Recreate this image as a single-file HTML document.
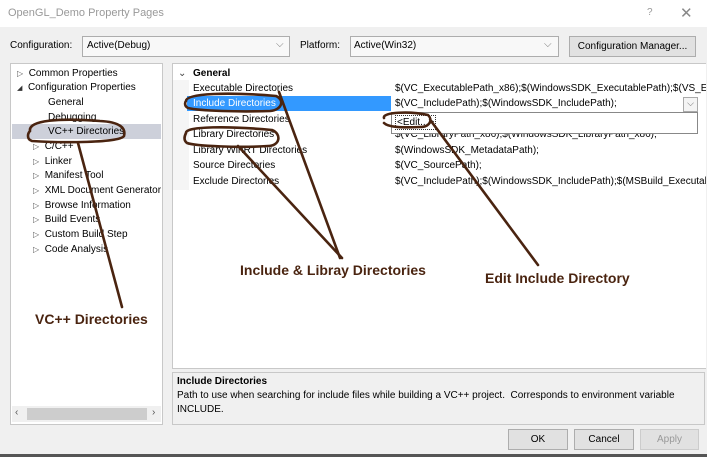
<!DOCTYPE html><html><head><style>
body{margin:0;width:707px;height:457px;background:#f0f0f0;font-family:"Liberation Sans",sans-serif;font-size:10px;color:#000;position:relative;overflow:hidden}
.a{position:absolute;white-space:nowrap}
.box{position:absolute;background:#fff;border:1px solid #adadad;overflow:hidden}
.btn{position:absolute;background:#e1e1e1;border:1px solid #adadad;text-align:center;line-height:19px}
.t{position:absolute;white-space:nowrap;line-height:15px}
.lab{position:absolute;white-space:nowrap;font-weight:bold;color:#4a2410;font-size:14px}
</style></head><body>
<div class="a" style="left:0;top:0;width:707px;height:27px;background:#fff"></div>
<div class="a" style="left:8px;top:7px;color:#999;font-size:11px">OpenGL_Demo Property Pages</div>
<div class="a" style="left:647px;top:7px;color:#999">?</div>
<div class="a" style="left:680px;top:4px;color:#888;font-size:15px">✕</div>

<div class="a" style="left:10px;top:40px">Configuration:</div>
<div class="box" style="left:82px;top:36px;width:206px;height:19px;background:#f8f8f8"><span class="a" style="left:4px;top:3px">Active(Debug)</span><span class="a" style="left:193px;top:2px;color:#777">⌵</span></div>
<div class="a" style="left:300px;top:40px">Platform:</div>
<div class="box" style="left:350px;top:36px;width:207px;height:19px;background:#f8f8f8"><span class="a" style="left:3px;top:3px">Active(Win32)</span><span class="a" style="left:193px;top:2px;color:#777">⌵</span></div>
<div class="btn" style="left:569px;top:36px;width:125px;height:19px">Configuration Manager...</div>

<div class="box" style="left:10px;top:63px;width:151px;height:360px;border-color:#c8c8c8">
<div class="a" style="left:1px;top:60px;width:149px;height:15px;background:#cdd0da"></div>
<div class="t" style="left:6px;top:2px"><span style="font-size:8px;color:#555">▷</span>&nbsp; Common Properties</div>
<div class="t" style="left:6px;top:16px"><span style="font-size:7px;color:#333">◢</span>&nbsp; Configuration Properties</div>
<div class="t" style="left:37px;top:31px">General</div>
<div class="t" style="left:37px;top:46px">Debugging</div>
<div class="t" style="left:37px;top:60px">VC++ Directories</div>
<div class="t" style="left:22px;top:75px"><span style="font-size:8px;color:#555">▷</span>&nbsp; C/C++</div>
<div class="t" style="left:22px;top:90px"><span style="font-size:8px;color:#555">▷</span>&nbsp; Linker</div>
<div class="t" style="left:22px;top:104px"><span style="font-size:8px;color:#555">▷</span>&nbsp; Manifest Tool</div>
<div class="t" style="left:22px;top:119px"><span style="font-size:8px;color:#555">▷</span>&nbsp; XML Document Generator</div>
<div class="t" style="left:22px;top:134px"><span style="font-size:8px;color:#555">▷</span>&nbsp; Browse Information</div>
<div class="t" style="left:22px;top:148px"><span style="font-size:8px;color:#555">▷</span>&nbsp; Build Events</div>
<div class="t" style="left:22px;top:163px"><span style="font-size:8px;color:#555">▷</span>&nbsp; Custom Build Step</div>
<div class="t" style="left:22px;top:178px"><span style="font-size:8px;color:#555">▷</span>&nbsp; Code Analysis</div>
<div class="a" style="left:1px;top:342px;width:149px;height:16px;background:#f0f0f0"></div>
<div class="a" style="left:16px;top:344px;width:120px;height:12px;background:#cdcdcd"></div>
<div class="a" style="left:4px;top:343px;color:#555">‹</div><div class="a" style="left:141px;top:343px;color:#555">›</div>
</div>

<div class="box" style="left:172px;top:63px;width:533px;height:304px;border-color:#c8c8c8;border-right:none">
<div class="a" style="left:0;top:16px;width:16px;height:110px;background:#f5f5f5"></div>
<div class="t" style="left:5px;top:2px;color:#444">⌄</div>
<div class="t" style="left:20px;top:2px;font-weight:bold">General</div>
<div class="a" style="left:14px;top:32px;width:204px;height:15px;background:#3399ff"></div>
<div class="t" style="left:20px;top:17px">Executable Directories</div>
<div class="t" style="left:20px;top:32px;color:#fff">Include Directories</div>
<div class="t" style="left:20px;top:48px">Reference Directories</div>
<div class="t" style="left:20px;top:63px">Library Directories</div>
<div class="t" style="left:20px;top:79px">Library WinRT Directories</div>
<div class="t" style="left:20px;top:94px">Source Directories</div>
<div class="t" style="left:20px;top:110px">Exclude Directories</div>
<div class="t" style="left:222px;top:17px">$(VC_ExecutablePath_x86);$(WindowsSDK_ExecutablePath);$(VS_Executa</div>
<div class="t" style="left:222px;top:32px">$(VC_IncludePath);$(WindowsSDK_IncludePath);</div>
<div class="a" style="left:510px;top:33px;width:13px;height:13px;border:1px solid #aaa;background:#f4f4f4;color:#666;font-size:9px;text-align:center">⌵</div>
<div class="t" style="left:222px;top:63px">$(VC_LibraryPath_x86);$(WindowsSDK_LibraryPath_x86);</div>
<div class="t" style="left:222px;top:79px">$(WindowsSDK_MetadataPath);</div>
<div class="t" style="left:222px;top:94px">$(VC_SourcePath);</div>
<div class="t" style="left:222px;top:110px">$(VC_IncludePath);$(WindowsSDK_IncludePath);$(MSBuild_Executable</div>
<div class="a" style="left:218px;top:48px;width:305px;height:20px;background:#fff;border:1px solid #888"><span class="a" style="left:3px;top:2px;border:1px dotted #333;padding:0 1px;line-height:13px">&lt;Edit...&gt;</span></div>
</div>

<div class="box" style="left:172px;top:372px;width:531px;height:51px;background:#f0f0f0;border-color:#c8c8c8">
<div class="a" style="left:4px;top:3px;font-weight:bold">Include Directories</div>
<div class="a" style="left:4px;top:17px">Path to use when searching for include files while building a VC++ project.&nbsp; Corresponds to environment variable</div>
<div class="a" style="left:4px;top:31px">INCLUDE.</div>
</div>

<div class="btn" style="left:508px;top:429px;width:58px;height:19px">OK</div>
<div class="btn" style="left:574px;top:429px;width:58px;height:19px">Cancel</div>
<div class="btn" style="left:640px;top:429px;width:57px;height:19px;color:#999;border-color:#ccc">Apply</div>
<div class="a" style="left:0;top:454px;width:707px;height:3px;background:#555"></div>

<svg class="a" style="left:0;top:0" width="707" height="457" fill="none" stroke="#4a2410" stroke-width="2.6" stroke-linecap="round">
<path d="M30,131 C28,120 60,118 100,121 C120,122 126,128 124,136 C120,143 60,143 32,141 C26,139 28,133 30,131"/>
<path d="M186,101 C186,93 230,92 276,96 C285,100 282,110 270,111 C240,112 200,111 188,108 C184,106 185,102 186,101"/>
<path d="M186,133 C185,126 230,126 272,130 C282,134 280,146 268,146 C240,148 195,146 187,143 C183,140 185,135 186,133"/>
<path d="M384,118 C382,112 410,111 428,115 C433,120 430,127 420,127 C400,128 388,127 384,123"/>
<path d="M78,143 L122,307"/>
<path d="M279,92 L340,258"/>
<path d="M238,146 L342,258"/>
<path d="M431,121 L538,265"/>
</svg>
<div class="lab" style="left:240px;top:262px">Include &amp; Libray Directories</div>
<div class="lab" style="left:485px;top:270px">Edit Include Directory</div>
<div class="lab" style="left:35px;top:311px">VC++ Directories</div>
</body></html>
